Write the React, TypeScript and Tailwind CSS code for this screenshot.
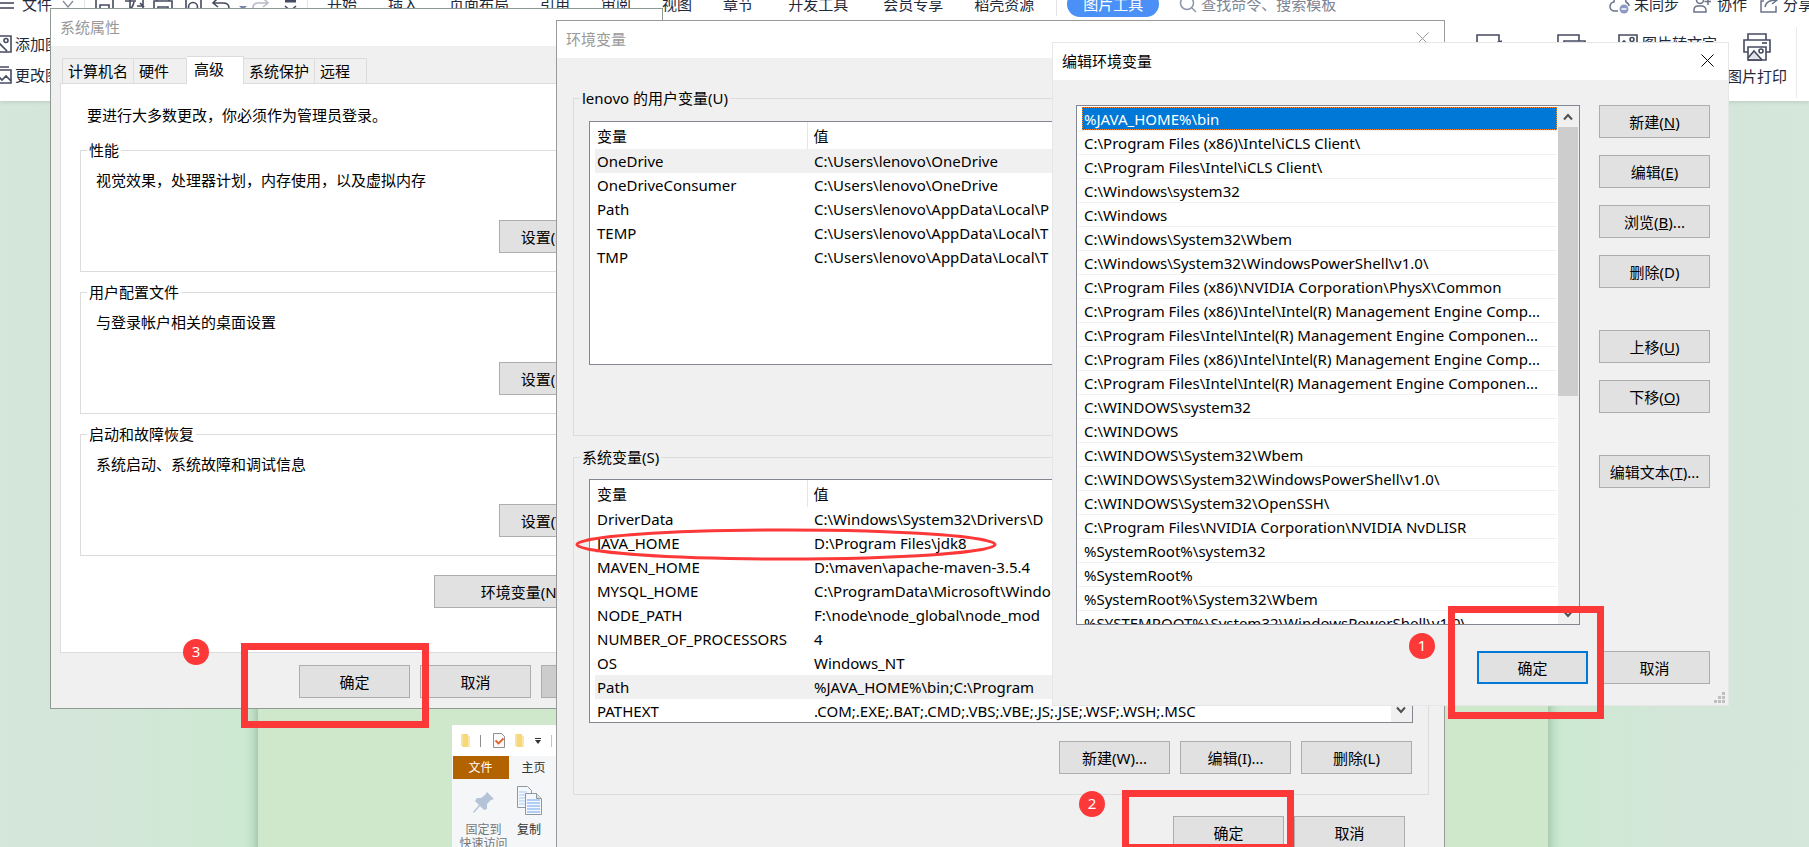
import * as React from "react";
import clsx from "clsx";

type Variable = { name: string; value: string; selected?: boolean };

const MENU_ITEMS = [
  "开始",
  "插入",
  "页面布局",
  "引用",
  "审阅",
  "视图",
  "章节",
  "开发工具",
  "会员专享",
  "稻壳资源",
];

const USER_VARS: Variable[] = [
  { name: "OneDrive", value: "C:\\Users\\lenovo\\OneDrive", selected: true },
  { name: "OneDriveConsumer", value: "C:\\Users\\lenovo\\OneDrive" },
  { name: "Path", value: "C:\\Users\\lenovo\\AppData\\Local\\P" },
  { name: "TEMP", value: "C:\\Users\\lenovo\\AppData\\Local\\T" },
  { name: "TMP", value: "C:\\Users\\lenovo\\AppData\\Local\\T" },
];

const SYSTEM_VARS: Variable[] = [
  { name: "DriverData", value: "C:\\Windows\\System32\\Drivers\\D" },
  { name: "JAVA_HOME", value: "D:\\Program Files\\jdk8" },
  { name: "MAVEN_HOME", value: "D:\\maven\\apache-maven-3.5.4" },
  { name: "MYSQL_HOME", value: "C:\\ProgramData\\Microsoft\\Windo" },
  { name: "NODE_PATH", value: "F:\\node\\node_global\\node_mod" },
  { name: "NUMBER_OF_PROCESSORS", value: "4" },
  { name: "OS", value: "Windows_NT" },
  { name: "Path", value: "%JAVA_HOME%\\bin;C:\\Program", selected: true },
  { name: "PATHEXT", value: ".COM;.EXE;.BAT;.CMD;.VBS;.VBE;.JS;.JSE;.WSF;.WSH;.MSC" },
];

const PATH_ENTRIES = [
  "%JAVA_HOME%\\bin",
  "C:\\Program Files (x86)\\Intel\\iCLS Client\\",
  "C:\\Program Files\\Intel\\iCLS Client\\",
  "C:\\Windows\\system32",
  "C:\\Windows",
  "C:\\Windows\\System32\\Wbem",
  "C:\\Windows\\System32\\WindowsPowerShell\\v1.0\\",
  "C:\\Program Files (x86)\\NVIDIA Corporation\\PhysX\\Common",
  "C:\\Program Files (x86)\\Intel\\Intel(R) Management Engine Comp...",
  "C:\\Program Files\\Intel\\Intel(R) Management Engine Componen...",
  "C:\\Program Files (x86)\\Intel\\Intel(R) Management Engine Comp...",
  "C:\\Program Files\\Intel\\Intel(R) Management Engine Componen...",
  "C:\\WINDOWS\\system32",
  "C:\\WINDOWS",
  "C:\\WINDOWS\\System32\\Wbem",
  "C:\\WINDOWS\\System32\\WindowsPowerShell\\v1.0\\",
  "C:\\WINDOWS\\System32\\OpenSSH\\",
  "C:\\Program Files\\NVIDIA Corporation\\NVIDIA NvDLISR",
  "%SystemRoot%\\system32",
  "%SystemRoot%",
  "%SystemRoot%\\System32\\Wbem",
  "%SYSTEMROOT%\\System32\\WindowsPowerShell\\v1.0\\",
];

function WinButton({
  children,
  className,
  primary,
  disabled,
}: {
  children?: React.ReactNode;
  className?: string;
  primary?: boolean;
  disabled?: boolean;
}) {
  return (
    <button
      type="button"
      disabled={disabled}
      className={clsx(
        "h-[33px] shrink-0 whitespace-nowrap text-center leading-5",
        primary ? "border-2 border-[#0078d7]" : "border border-[#adadad]",
        disabled ? "bg-[#cccccc] text-[#838383]" : "bg-[#e1e1e1]",
        className ?? "w-[111px]",
      )}
    >
      {children}
    </button>
  );
}

function CloseIcon({ className }: { className?: string }) {
  return (
    <svg viewBox="0 0 13 13" className={clsx("size-[13px]", className)} fill="none" stroke="currentColor">
      <path d="M.5.5l12 12M12.5.5l-12 12" />
    </svg>
  );
}

function ScrollArrow({ down }: { down?: boolean }) {
  return (
    <div className="flex h-[21px] shrink-0 items-center justify-center text-[#505050]">
      <svg viewBox="0 0 10 8" className="h-2 w-[10px]" fill="none" stroke="currentColor" strokeWidth="2">
        <path d={down ? "M1 1.5l4 4.5 4-4.5" : "M1 6.5L5 2l4 4.5"} />
      </svg>
    </div>
  );
}

function GroupBox({
  legend,
  className,
  children,
}: {
  legend: string;
  className?: string;
  children: React.ReactNode;
}) {
  return (
    <fieldset className={clsx("min-w-0 border border-[#dcdcdc]", className)}>
      <legend className="px-[2px] leading-5">{legend}</legend>
      {children}
    </fieldset>
  );
}

/* ---------- document editor behind the dialogs ---------- */

function MenuBar() {
  return (
    <nav className="-mt-[13px] flex h-[34px] items-center overflow-hidden whitespace-nowrap leading-5">
      <svg viewBox="0 0 14 12" className="h-3 w-[14px] shrink-0" fill="none" stroke="#3b4054" strokeWidth="1.4">
        <path d="M0 1h14M0 5h14M0 10h14" />
      </svg>
      <a href="#file" className="ml-2">文件</a>
      <svg viewBox="0 0 12 8" className="ml-[10px] h-2 w-3 shrink-0" fill="none" stroke="#8b8f9c" strokeWidth="1.4">
        <path d="M1 1l5 6 5-6" />
      </svg>
      <span className="ml-[10px] h-6 w-px shrink-0 bg-[#e3e4e8]" />
      <svg viewBox="0 0 204 20" className="ml-[10px] h-5 w-[204px] shrink-0" fill="none" stroke="#454b60" strokeWidth="1.6">
        <path d="M1 1h13l4 4v14H1zM5 19v-8h9v8" />
        <path d="M30 7h11M35 3v14M30 17c5 0 8-4 9-9M42 12h6l-3-3M48 5v14M46 5h2" />
        <path d="M62 7V1h12v6M59 19V7h18v12M63 19v-6h10v6" />
        <path d="M91 19V1h15v18" />
        <circle cx="98" cy="13" r="4.5" />
        <path d="M123 4l-5 5 5 4M118 9h10c4 0 6 2 6 5s-2 5-5 5h-3" />
        <path d="M144 12h8l-4 4z" fill="#7b86ab" stroke="none" />
        <path d="M168 4l5 5-5 4M173 9h-10c-4 0-5 2-5 5s1 5 4 5" stroke="#b9bcc6" />
        <path d="M190 7h11" strokeWidth="3" />
        <path d="M190 12l5.500 5 5.500-5" />
      </svg>
      <span className="ml-[8px] h-6 w-px shrink-0 bg-[#e3e4e8]" />
      <ul className="ml-[19px] flex gap-[31px]">
        {MENU_ITEMS.map((item) => (
          <li key={item} className={clsx(item === "开发工具" && "px-1")}>
            <a href={`#${item}`}>{item}</a>
          </li>
        ))}
      </ul>
      <span className="ml-[22px] h-6 w-px shrink-0 bg-[#e3e4e8]" />
      <button type="button" className="ml-[10px] h-[26px] shrink-0 rounded-full bg-[#4a90f7] px-4 text-white">
        图片工具
      </button>
      <label className="ml-5 flex min-w-0 items-center gap-1 text-[#7d8493]">
        <svg viewBox="0 0 18 18" className="size-[18px] shrink-0" fill="none" stroke="#8d95a8" strokeWidth="1.5">
          <circle cx="8" cy="8" r="6.500" />
          <path d="M13 13l4 4" />
        </svg>
        <input
          aria-label="查找命令"
          placeholder="查找命令、搜索模板"
          className="w-[160px] bg-transparent placeholder:text-[#7d8493]"
        />
      </label>
      <div className="-mr-1 ml-auto flex shrink-0 items-center">
        <svg viewBox="0 0 22 20" className="h-5 w-[22px]" fill="none" stroke="#6b7389" strokeWidth="1.500">
          <path d="M9 17H6c-3 0-5-2-5-4.500S3 8 5 8c0-4 3-6 6-6s6 3 6 6c2 1 3 2 3 4" />
          <circle cx="15" cy="15" r="4.500" fill="#8d9bc4" stroke="none" />
          <path d="M12.500 15h5" stroke="#fff" />
        </svg>
        <button type="button" className="ml-[3px]">未同步</button>
        <svg viewBox="0 0 18 18" className="ml-[14px] size-[18px]" fill="none" stroke="#6b7389" strokeWidth="1.500">
          <circle cx="7" cy="5" r="3.500" />
          <path d="M1 17v-2c0-2 1-4 4-4h4c2 0 4 2 4 4v2zM15 3v7M11.500 6.500H18" />
        </svg>
        <button type="button" className="ml-[6px]">协作</button>
        <svg viewBox="0 0 18 18" className="ml-[13px] size-[18px]" fill="none" stroke="#6b7389" strokeWidth="1.500">
          <path d="M4 6H1v11h15v-6M5 12c1-5 4-7 11-7M12 1l5 4-5 4" />
        </svg>
        <button type="button" className="ml-[5px]">分享</button>
      </div>
    </nav>
  );
}

function PictureIcon({ className }: { className?: string }) {
  return (
    <svg viewBox="0 0 20 18" className={clsx("h-[18px] w-5 shrink-0", className)} fill="none" stroke="#454b60" strokeWidth="1.600">
      <path d="M1 1h18v16H1zM1 12l5-5 9 9" />
      <circle cx="14" cy="5.500" r="2" />
    </svg>
  );
}

function Ribbon() {
  return (
    <div className="flex h-20 overflow-hidden whitespace-nowrap pt-px leading-5">
      <div className="-ml-2 flex flex-col gap-[11px] pt-3">
        <button type="button" className="flex items-center gap-[3px]">
          <PictureIcon />
          添加图片
        </button>
        <button type="button" className="flex items-center gap-[3px]">
          <svg viewBox="0 0 20 18" className="h-[18px] w-5 shrink-0" fill="none" stroke="#454b60" strokeWidth="1.600">
            <path d="M1 4h18v13H1zM3 1h14M1 15l5-5 4 4 4-4 5 5" />
          </svg>
          更改图片
        </button>
      </div>
      <div className="ml-auto flex items-start">
        <svg viewBox="0 0 26 26" className="mt-3 size-[26px]" fill="none" stroke="#454b60" strokeWidth="1.600">
          <path d="M1 1h22v24H1zM14 11l12-4" />
        </svg>
        <svg viewBox="0 0 30 26" className="ml-[55px] mt-3 h-[26px] w-[30px]" fill="none" stroke="#454b60" strokeWidth="1.600">
          <path d="M22 7V1H1v16h5M7 7h21v18H7z" />
        </svg>
        <button type="button" className="ml-[31px] mt-[11px] flex items-center gap-1">
          <PictureIcon />
          图片转文字
        </button>
        <button type="button" className="ml-[10px] flex flex-col items-center pt-[11px]">
          <svg viewBox="0 0 28 28" className="size-7" fill="none" stroke="#454b60" strokeWidth="1.600">
            <path d="M5 7V1h18v6M5 19H1V7h26v12h-4" />
            <path d="M19 10h5" />
            <path d="M5 14h18v13H5z" fill="#fff" />
            <path d="M5 25l6-7 8 9M5 27h14z" fill="#e3e4e8" />
            <circle cx="18" cy="18" r="2" />
          </svg>
          <span className="mt-[5px]">图片打印</span>
        </button>
        <span className="ml-[9px] mr-3 mt-[5px] h-[71px] w-px bg-[#e9eaed]" />
      </div>
    </div>
  );
}

function Folder() {
  return (
    <svg viewBox="0 0 10 15" className="h-[15px] w-[10px]">
      <path d="M0 1h7v12l3 1H2L0 12z" fill="#f7d778" />
      <path d="M7 3h2v11H7z" fill="#fbe8a6" />
      <path d="M0 1h2v12H0z" fill="#fbe29a" />
    </svg>
  );
}

// Picture pasted into the document: top-left of an Explorer window
function ExplorerPicture() {
  return (
    <div className="w-[420px] bg-[#f5f6f8] pb-4 text-xs leading-[14px]">
      <div className="flex h-[31px] items-center bg-white pl-[9px]">
        <Folder />
        <span className="ml-[9px] h-3 w-px bg-[#8f8f8f]" />
        <svg viewBox="0 0 12 15" className="ml-3 h-[15px] w-3" fill="#fafafa" stroke="#8f8f8f">
          <path d="M.5.500h8l3 3v11H.500z" />
          <path d="M2.500 7.500l3 3 5-5" fill="none" stroke="#e2622c" strokeWidth="1.800" />
        </svg>
        <span className="ml-[10px]">
          <Folder />
        </span>
        <svg viewBox="0 0 6 6" className="ml-[10px] size-[6px]" fill="#333">
          <path d="M0 0h6v1H0zM0 2h6L3 6z" />
        </svg>
        <span className="ml-[10px] h-3 w-px bg-[#c4c4c4]" />
      </div>
      <div className="flex h-[23px] items-stretch">
        <button type="button" className="ml-px w-14 bg-[#b36200] text-white">文件</button>
        <button type="button" className="ml-[13px] text-[#333]">主页</button>
      </div>
      <div className="flex gap-[9px] pl-2 pt-[13px]">
        <div className="flex w-12 flex-col items-center text-[#777]">
          <svg viewBox="0 0 22 22" className="size-[22px]" fill="#b4c3d8">
            <path d="M14 0l7 7-3 1-4 4v5l-3 1-4-4-6 7-1-1 6-7-4-4 2-3h4l4-3z" />
          </svg>
          <span className="mt-[9px] whitespace-nowrap">固定到</span>
          <span className="whitespace-nowrap">快速访问</span>
        </div>
        <div className="flex flex-col items-center text-[#333]">
          <svg viewBox="0 0 25 29" className="-mt-[6px] h-[29px] w-[25px]" fill="#f4f8fd" stroke="#8f979f">
            <path d="M.500.500h10l4 4v17H.500z" />
            <path d="M2 6h8M2 9h8M2 12h8M2 15h8M2 18h8" stroke="#a9cbf5" />
            <path d="M8.500 7.500h11l5 5v16h-16z" />
            <path d="M19.500 7.500v5h5" fill="#ddd" />
            <path d="M10 14h13M10 17h13M10 20h13M10 23h13M10 26h13" stroke="#6ea6ee" />
          </svg>
          <span className="mt-2 whitespace-nowrap">复制</span>
        </div>
      </div>
    </div>
  );
}

/* ---------- dialogs ---------- */

const TABS = ["计算机名", "硬件", "高级", "系统保护", "远程"];
const TAB_WIDTHS = ["w-[72px]", "w-[53px]", "w-[57px]", "w-[71px]", "w-[52px]"];

const SECTIONS = [
  { title: "性能", text: "视觉效果，处理器计划，内存使用，以及虚拟内存", action: "设置(S)..." },
  { title: "用户配置文件", text: "与登录帐户相关的桌面设置", action: "设置(E)..." },
  { title: "启动和故障恢复", text: "系统启动、系统故障和调试信息", action: "设置(T)..." },
];

function SystemProperties() {
  return (
    <section className="absolute left-[50px] top-2 isolate flex w-[613px] flex-col border border-[#8f9a92] bg-[#f0f0f0]">
      <h2 className="flex h-[37px] items-center bg-white pb-[2px] pl-[9px] text-[#999]">系统属性</h2>
      <div className="px-[9px] pb-[10px] pt-[10px]">
        <div role="tablist" className="relative z-10 -mb-px flex items-end pl-[2px] leading-5">
          {TABS.map((tab, i) => (
            <button
              key={tab}
              type="button"
              role="tab"
              aria-selected={tab === "高级"}
              className={clsx(
                "border-t border-r border-[#dcdcdc] pl-[5px] text-left",
                TAB_WIDTHS[i],
                i === 0 && "border-l",
                tab === "高级" ? "h-7 bg-white pb-[3px] pl-[7px]" : "mb-px h-[25px] bg-[#f0f0f0]",
              )}
            >
              {tab}
            </button>
          ))}
        </div>
        <div className="border border-[#dcdcdc] bg-white px-[19px] pb-11 pt-[21px]">
          <p className="pl-[7px] leading-5">要进行大多数更改，你必须作为管理员登录。</p>
          <div className="mt-[15px] flex flex-col gap-[10px]">
            {SECTIONS.map((s) => (
              <GroupBox key={s.title} legend={s.title} className="h-[132px] pl-[6px] pr-[30px]">
                <p className="pl-[9px] pt-[10px] leading-5">{s.text}</p>
                <div className="mt-[30px] flex justify-end">
                  <WinButton className="w-[103px]">{s.action}</WinButton>
                </div>
              </GroupBox>
            ))}
          </div>
          <div className="mt-[19px] flex justify-end pr-[13px]">
            <WinButton className="w-[186px]">环境变量(N)...</WinButton>
          </div>
        </div>
        <div className="mt-3 flex justify-end gap-[10px] pr-px">
          <WinButton>确定</WinButton>
          <WinButton>取消</WinButton>
          <WinButton disabled>应用(A)</WinButton>
        </div>
      </div>
    </section>
  );
}

function VariableTable({ vars, scroll }: { vars: Variable[]; scroll?: boolean }) {
  return (
    <div className="flex h-[244px] overflow-hidden border border-[#828790] bg-white">
      <div className="min-w-0 flex-1 pl-[5px]">
        <table className="w-full table-fixed border-collapse whitespace-nowrap text-left">
          <thead>
            <tr className="h-[27px]">
              <th className="w-[212px] border-r border-[#e5e5e5] pl-[2px] font-normal">变量</th>
              <th className="pl-[6px] font-normal">值</th>
            </tr>
          </thead>
          <tbody>
            {vars.map((v) => (
              <tr key={v.name} className={clsx("h-6", v.selected && "bg-[#f0f0f0]")}>
                <td className="pl-[2px] leading-6">{v.name}</td>
                <td className="overflow-hidden pl-[7px] leading-6">{v.value}</td>
              </tr>
            ))}
          </tbody>
        </table>
      </div>
      {scroll && (
        <div className="flex w-[21px] flex-col bg-[#f0f0f0] pr-px">
          <ScrollArrow />
          <div className="h-[120px] bg-[#cdcdcd]" />
          <div className="mt-auto pb-[2px]">
            <ScrollArrow down />
          </div>
        </div>
      )}
    </div>
  );
}

function EnvironmentVariables() {
  return (
    <section className="absolute left-[556px] top-5 w-[889px] border border-[#999] bg-[#f0f0f0]">
      <header className="flex h-[37px] items-center justify-between bg-white pb-[2px] pl-[9px] pr-[15px] text-[#999]">
        <h2>环境变量</h2>
        <button type="button" aria-label="关闭">
          <CloseIcon />
        </button>
      </header>
      <div className="pb-[30px] pl-4 pr-[15px] pt-[30px]">
        {[
          { legend: "lenovo 的用户变量(U)", vars: USER_VARS, keys: ["新建(N)...", "编辑(E)...", "删除(D)"] },
          { legend: "系统变量(S)", vars: SYSTEM_VARS, keys: ["新建(W)...", "编辑(I)...", "删除(L)"] },
        ].map((group, i) => (
          <GroupBox
            key={group.legend}
            legend={group.legend}
            className={clsx("h-[348px] pl-[6px] pr-[15px]", i > 0 && "mt-[11px]")}
          >
            <div className={clsx("pl-[9px]", i > 0 ? "pt-3" : "pt-[13px]")}>
              <VariableTable vars={group.vars} scroll={i > 0} />
              <div className="mt-[18px] flex justify-end gap-[10px] pr-px">
                {group.keys.map((k) => (
                  <WinButton key={k}>{k}</WinButton>
                ))}
              </div>
            </div>
          </GroupBox>
        ))}
        <div className="mt-[21px] flex justify-end gap-[10px] pr-6">
          <WinButton>确定</WinButton>
          <WinButton>取消</WinButton>
        </div>
      </div>
    </section>
  );
}

function ResizeGrip() {
  return (
    <svg viewBox="0 0 11 11" className="absolute bottom-[2px] right-[3px] size-[11px]" fill="#bfbfbf">
      <path d="M8 0h3v3H8zM4 4h3v3H4zM8 4h3v3H8zM0 8h3v3H0zM4 8h3v3H4zM8 8h3v3H8z" />
    </svg>
  );
}

function EditVariable() {
  return (
    <section className="absolute left-[1052px] top-[42px] w-[677px] border border-[#e6e6e6] bg-[#f0f0f0]">
      <header className="flex h-[37px] items-center justify-between bg-white pb-[2px] pl-[9px] pr-[14px]">
        <h2>编辑环境变量</h2>
        <button type="button" aria-label="关闭">
          <CloseIcon />
        </button>
      </header>
      <div className="pb-[21px] pl-[23px] pr-[18px] pt-[25px]">
        <div className="flex gap-[19px]">
          <div className="flex h-[520px] min-w-0 flex-1 overflow-hidden border border-[#828790] bg-white">
            <ul role="listbox" aria-label="路径" className="min-w-0 flex-1 whitespace-nowrap px-px pt-px leading-6">
              {PATH_ENTRIES.map((entry, i) => (
                <li key={i} role="option" aria-selected={i === 0} className="border-b border-[#f0f0f0] pl-1">
                  <div
                    className={clsx(
                      "h-[23px] pl-px",
                      i === 0
                        ? "border border-dotted border-[#ff8728] bg-[#0078d7] leading-[22px] text-white"
                        : "border-l border-transparent",
                    )}
                  >
                    {entry}
                  </div>
                </li>
              ))}
            </ul>
            <div className="flex w-[21px] flex-col bg-[#f0f0f0] pr-px">
              <ScrollArrow />
              <div className="h-[269px] bg-[#cdcdcd]" />
              <div className="mt-auto">
                <ScrollArrow down />
              </div>
            </div>
          </div>
          <div className="flex flex-col gap-[17px]">
            <WinButton>新建(<u>N</u>)</WinButton>
            <WinButton>编辑(<u>E</u>)</WinButton>
            <WinButton>浏览(<u>B</u>)...</WinButton>
            <WinButton>删除(D)</WinButton>
            <WinButton className="mt-[25px] w-[111px]">上移(<u>U</u>)</WinButton>
            <WinButton>下移(<u>O</u>)</WinButton>
            <WinButton className="mt-[25px] w-[111px]">编辑文本(<u>T</u>)...</WinButton>
          </div>
        </div>
        <div className="mt-[26px] flex justify-end gap-[11px]">
          <WinButton primary>确定</WinButton>
          <WinButton>取消</WinButton>
        </div>
      </div>
      <ResizeGrip />
    </section>
  );
}

/* ---------- red step marks drawn over everything ---------- */

function Badge({ children, className }: { children: React.ReactNode; className: string }) {
  return (
    <span
      className={clsx(
        "absolute flex size-[26px] items-center justify-center rounded-full bg-[#fc3838] pb-[2px] leading-5 text-white",
        className,
      )}
    >
      {children}
    </span>
  );
}

function Annotations() {
  return (
    <div className="pointer-events-none">
      <Badge className="left-[183px] top-[639px]">3</Badge>
      <div className="absolute left-[241px] top-[643px] h-[85px] w-[188px] border-[7px] border-[#fc3838]" />
      <Badge className="left-[1079px] top-[791px]">2</Badge>
      <div className="absolute left-[1122px] top-[790px] h-[61px] w-[172px] border-[7px] border-[#fc3838]" />
      <Badge className="left-[1409px] top-[633px]">1</Badge>
      <div className="absolute left-[1448px] top-[606px] h-[113px] w-[156px] border-[7px] border-[#fc3838]" />
      <svg viewBox="0 0 422 33" className="absolute left-[575px] top-[528px] h-[33px] w-[422px]" fill="none" stroke="#fc3838" strokeWidth="3">
        <ellipse cx="211" cy="16.500" rx="209" ry="14.500" />
      </svg>
    </div>
  );
}

export default function App() {
  return (
    <div className="relative flex h-screen flex-col overflow-hidden bg-white font-['Noto_Sans','Noto_Sans_CJK_SC',sans-serif] text-[15px] leading-5 text-black">
      <div className="relative bg-white text-[#22283a] shadow-[0_1px_4px_rgba(0,0,0,0.12)]">
        <MenuBar />
        <Ribbon />
      </div>
      <main className="flex-1 bg-[linear-gradient(to_right,#d5e6da_0%,#d3e6d8_6%,#cce9d1_14%,#cce9d1_86%,#d3e6d8_92%,#d5e6da_100%)] pr-1">
        <div className="mx-auto h-full max-w-[1290px] bg-[#cfe8cb] pl-[194px] pt-[624px] shadow-[0_0_12px_rgba(30,80,45,0.4)]">
          <ExplorerPicture />
        </div>
      </main>
      <SystemProperties />
      <EnvironmentVariables />
      <EditVariable />
      <Annotations />
    </div>
  );
}
